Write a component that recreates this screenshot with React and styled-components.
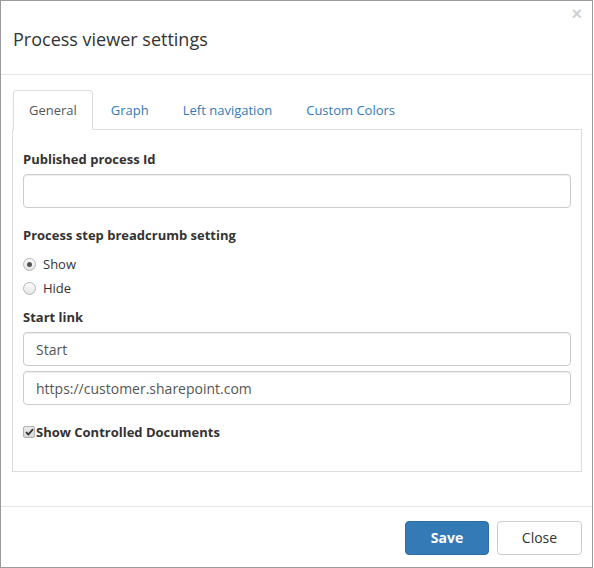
import styled, { createGlobalStyle } from 'styled-components';
import { useState } from 'react';

const GlobalStyle = createGlobalStyle`
  * { box-sizing: border-box; }
  body {
    margin: 0;
    background: #fff;
    font-family: "Open Sans", "Liberation Sans", sans-serif;
    font-size: 13px;
    line-height: 20px;
    color: #333;
  }
`;

const StModal = styled.div`
  width: 593px;
  height: 568px;
  border: 1px solid #9a9a9a;
  background: #fff;
  display: flex;
  flex-direction: column;
`;

const StHeader = styled.div`
  position: relative;
  height: 74px;
  padding: 2px 12px 0;
  display: flex;
  align-items: center;
  border-bottom: 1px solid #e5e5e5;
`;

const StTitle = styled.h4`
  margin: 0;
  font-size: 18px;
  font-weight: 400;
  line-height: 26px;
  color: #333;
`;

const StClose = styled.button`
  position: absolute;
  top: 3px;
  right: 10px;
  border: 0;
  background: none;
  padding: 0;
  font-family: "Liberation Sans", sans-serif;
  font-size: 18px;
  font-weight: 700;
  line-height: 20px;
  color: #000;
  opacity: 0.18;
  cursor: pointer;
`;

const StBody = styled.div`
  flex: 1;
  padding: 15px 10px 0 11px;
`;

const StTabs = styled.ul`
  list-style: none;
  margin: 0 0 -1px 1px;
  padding: 0;
  display: flex;
  position: relative;
  z-index: 1;
`;

const StTab = styled.li`
  margin-right: 2px;
`;

const StTabLink = styled.a`
  display: block;
  padding: 9px 15px 9px;
  line-height: 20px;
  border: 1px solid ${(p) => (p.$active ? '#ddd' : 'transparent')};
  border-bottom-color: ${(p) => (p.$active ? '#fff' : 'transparent')};
  border-radius: 4px 4px 0 0;
  background: ${(p) => (p.$active ? '#fff' : 'transparent')};
  color: ${(p) => (p.$active ? '#555' : '#337ab7')};
  text-decoration: none;
  cursor: pointer;
`;

const StPanel = styled.div`
  border: 1px solid #ddd;
  height: 343px;
  padding: 19px 10px 0;
`;

const StGroup = styled.div`
  margin-bottom: ${(p) => p.$mb ?? 17}px;
`;

const StLabel = styled.label`
  display: block;
  font-weight: 700;
  margin-bottom: ${(p) => p.$mb ?? 5}px;
`;

const StInput = styled.input`
  display: block;
  width: 100%;
  height: 34px;
  padding: 6px 12px;
  font-family: inherit;
  font-size: 14px;
  color: #555;
  border: 1px solid #ccc;
  border-radius: 4px;
  box-shadow: inset 0 1px 1px rgba(0, 0, 0, 0.075);
  outline: none;
  & + & {
    margin-top: 5px;
  }
`;

const StRadioList = styled.div`
  display: flex;
  flex-direction: column;
  gap: 4px;
  margin-top: 9px;
`;

const StChoice = styled.label`
  display: flex;
  align-items: center;
  gap: ${(p) => (p.$bold ? 0 : 7)}px;
  min-height: 20px;
  cursor: pointer;
  font-weight: ${(p) => (p.$bold ? 700 : 400)};
`;

const StRadioDot = styled.span`
  width: 13px;
  height: 13px;
  border-radius: 50%;
  border: 1px solid #b5b5b5;
  background: linear-gradient(#fdfdfd, #e4e4e4);
  display: flex;
  align-items: center;
  justify-content: center;
  &::after {
    content: '';
    width: 5px;
    height: 5px;
    border-radius: 50%;
    background: ${(p) => (p.$checked ? '#555' : 'transparent')};
  }
`;

const StCheckBox = styled.span`
  width: 12px;
  height: 12px;
  margin-right: 1px;
  border-radius: 2px;
  border: 1px solid #b0b0b0;
  background: linear-gradient(#ececec, #d6d6d6);
  display: flex;
  align-items: center;
  justify-content: center;
`;

const StFooter = styled.div`
  border-top: 1px solid #e5e5e5;
  height: 61px;
  padding: 14px 10px 0 0;
  display: flex;
  justify-content: flex-end;
  gap: 8px;
`;

const StButton = styled.button`
  height: 34px;
  padding: 6px 12px;
  font-family: inherit;
  font-size: 14px;
  line-height: 20px;
  border-radius: 4px;
  cursor: pointer;
  width: ${(p) => p.$w}px;
  font-weight: ${(p) => (p.$primary ? 700 : 400)};
  color: ${(p) => (p.$primary ? '#fff' : '#333')};
  background: ${(p) => (p.$primary ? '#337ab7' : '#fff')};
  border: 1px solid ${(p) => (p.$primary ? '#2e6da4' : '#ccc')};
`;

const tabs = ['General', 'Graph', 'Left navigation', 'Custom Colors'];

const App = () => {
  const [activeTab, setActiveTab] = useState('General');
  const [breadcrumb, setBreadcrumb] = useState('show');

  return (
    <>
      <GlobalStyle />
      <StModal>
        <StHeader>
          <StTitle>Process viewer settings</StTitle>
          <StClose aria-label="Close">×</StClose>
        </StHeader>
        <StBody>
          <StTabs>
            {tabs.map((t) => (
              <StTab key={t}>
                <StTabLink $active={t === activeTab} onClick={() => setActiveTab(t)}>
                  {t}
                </StTabLink>
              </StTab>
            ))}
          </StTabs>
          <StPanel>
            <StGroup>
              <StLabel>Published process Id</StLabel>
              <StInput defaultValue="" />
            </StGroup>
            <StGroup $mb={9}>
              <StLabel $mb={0}>Process step breadcrumb setting</StLabel>
              <StRadioList>
                <StChoice onClick={() => setBreadcrumb('show')}>
                  <StRadioDot $checked={breadcrumb === 'show'} />
                  Show
                </StChoice>
                <StChoice onClick={() => setBreadcrumb('hide')}>
                  <StRadioDot $checked={breadcrumb === 'hide'} />
                  Hide
                </StChoice>
              </StRadioList>
            </StGroup>
            <StGroup>
              <StLabel>Start link</StLabel>
              <StInput defaultValue="Start" />
              <StInput defaultValue="https://customer.sharepoint.com" />
            </StGroup>
            <StChoice $bold>
              <StCheckBox>
                <svg width="9" height="8" viewBox="0 0 9 8">
                  <path d="M1 4.2 L3.4 6.5 L8 1.2" fill="none" stroke="#333" strokeWidth="1.8" />
                </svg>
              </StCheckBox>
              Show Controlled Documents
            </StChoice>
          </StPanel>
        </StBody>
        <StFooter>
          <StButton $primary $w={84}>Save</StButton>
          <StButton $w={85}>Close</StButton>
        </StFooter>
      </StModal>
    </>
  );
};

export default App;
